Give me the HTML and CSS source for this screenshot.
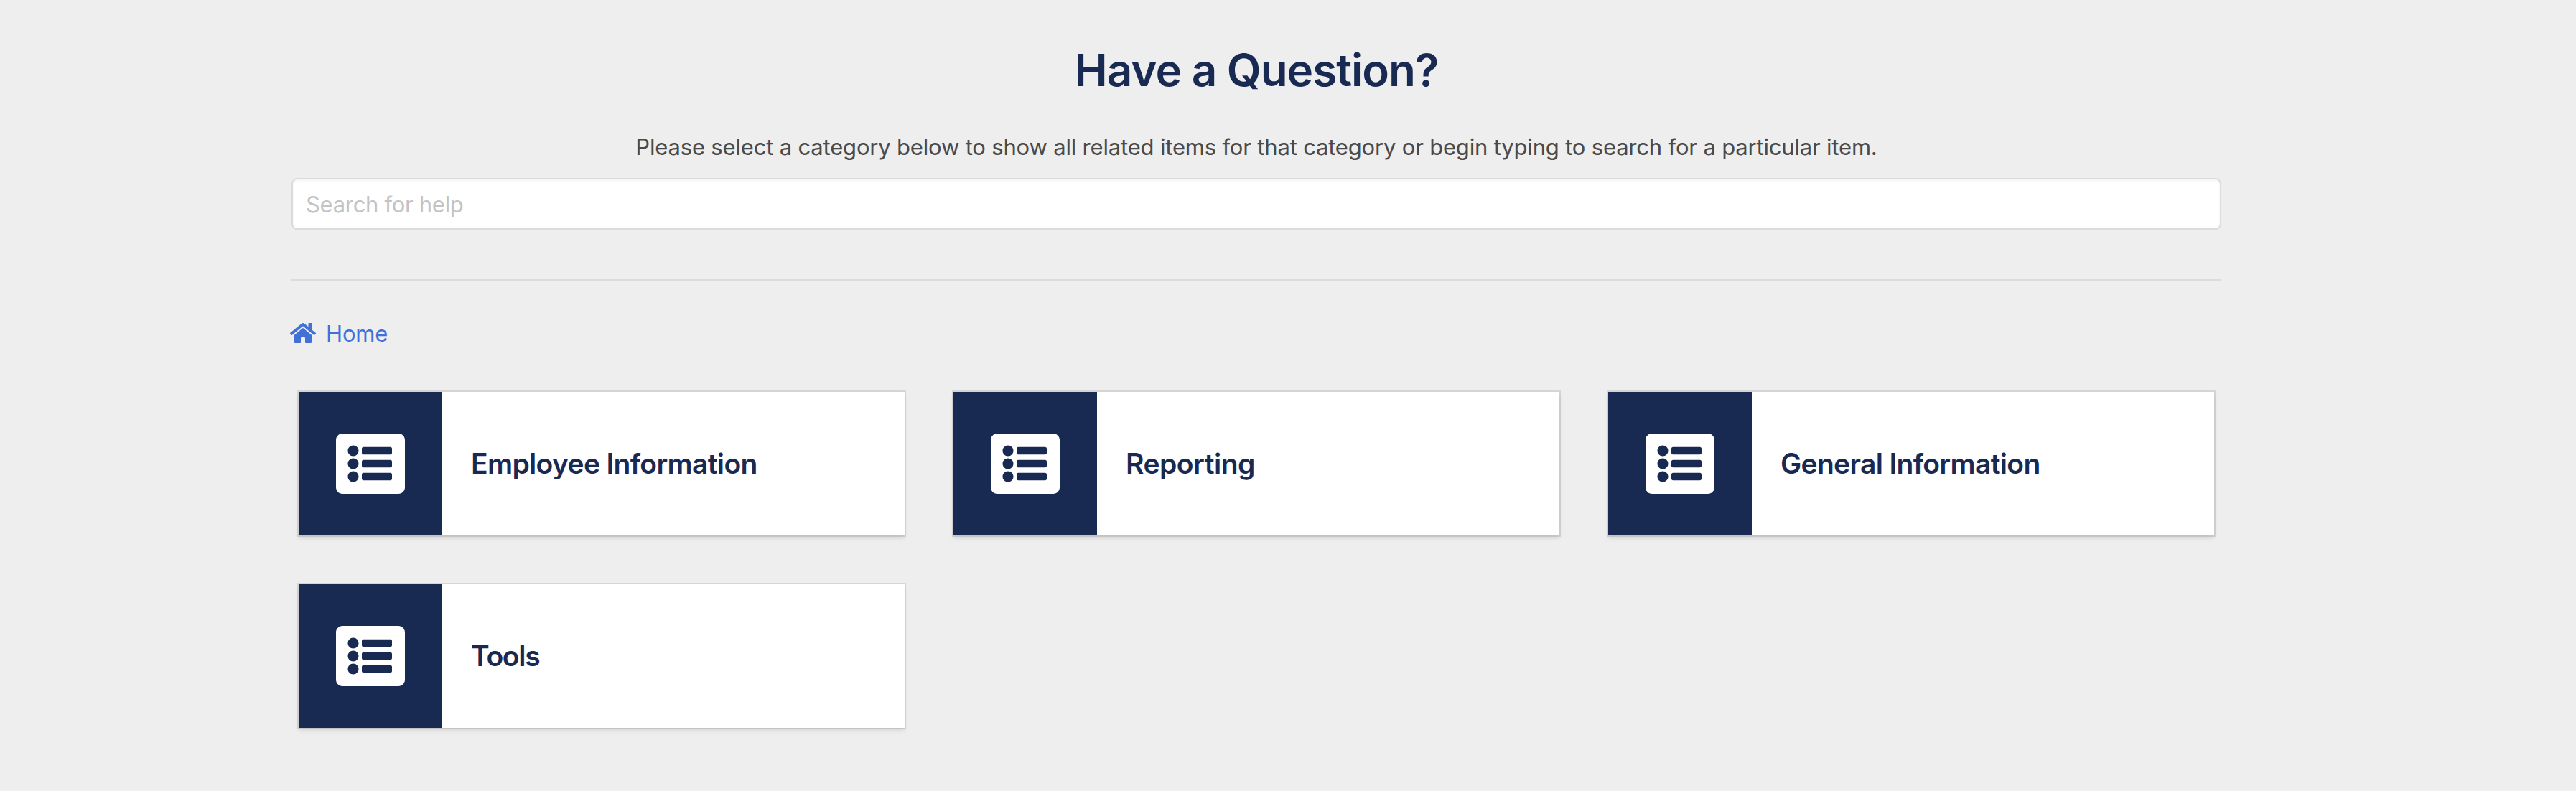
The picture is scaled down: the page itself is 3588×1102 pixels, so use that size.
FILE: index.html
```html
<!DOCTYPE html>
<html lang="en">
<head>
<meta charset="utf-8">
<title>Have a Question?</title>
<link rel="stylesheet" href="styles.css">
</head>
<body>
<svg class="sprite" aria-hidden="true">
  <symbol id="icon-list" viewBox="0 0 512 512">
    <path d="M464 480H48c-26.51 0-48-21.49-48-48V80c0-26.51 21.49-48 48-48h416c26.51 0 48 21.49 48 48v352c0 26.51-21.49 48-48 48zM128 120c-22.091 0-40 17.909-40 40s17.909 40 40 40 40-17.909 40-40-17.909-40-40-40zm0 96c-22.091 0-40 17.909-40 40s17.909 40 40 40 40-17.909 40-40-17.909-40-40-40zm0 96c-22.091 0-40 17.909-40 40s17.909 40 40 40 40-17.909 40-40-17.909-40-40-40zm288-136v-32c0-6.627-5.373-12-12-12H204c-6.627 0-12 5.373-12 12v32c0 6.627 5.373 12 12 12h200c6.627 0 12-5.373 12-12zm0 96v-32c0-6.627-5.373-12-12-12H204c-6.627 0-12 5.373-12 12v32c0 6.627 5.373 12 12 12h200c6.627 0 12-5.373 12-12zm0 96v-32c0-6.627-5.373-12-12-12H204c-6.627 0-12 5.373-12 12v32c0 6.627 5.373 12 12 12h200c6.627 0 12-5.373 12-12z"/>
  </symbol>
  <symbol id="icon-home" viewBox="0 0 576 512">
    <path d="M280.37 148.26L96 300.11V464a16 16 0 0 0 16 16l112.06-.29a16 16 0 0 0 15.92-16V368a16 16 0 0 1 16-16h64a16 16 0 0 1 16 16v95.64a16 16 0 0 0 16 16.05L464 480a16 16 0 0 0 16-16V300L295.67 148.26a12.19 12.19 0 0 0-15.3 0zM571.6 251.47L488 182.56V44.05a12 12 0 0 0-12-12h-56a12 12 0 0 0-12 12v72.61L318.47 43a48 48 0 0 0-61 0L4.34 251.47a12 12 0 0 0-1.6 16.9l25.5 31A12 12 0 0 0 45.15 301l235.22-193.74a12.19 12.19 0 0 1 15.3 0L530.9 301a12 12 0 0 0 16.9-1.6l25.5-31a12 12 0 0 0-1.7-16.93z"/>
  </symbol>
</svg>
<main class="help">
  <h1 class="help-title">Have a Question?</h1>
  <p class="help-intro">Please select a category below to show all related items for that category or begin typing to search for a particular item.</p>
  <input class="help-search" type="text" placeholder="Search for help">
  <hr class="help-rule">
  <nav class="breadcrumb">
    <a class="breadcrumb-link"><svg class="breadcrumb-icon"><use href="#icon-home"/></svg><span>Home</span></a>
  </nav>
  <section class="categories">
    <a class="card"><span class="card-icon"><svg><use href="#icon-list"/></svg></span><span class="card-name">Employee Information</span></a>
    <a class="card"><span class="card-icon"><svg><use href="#icon-list"/></svg></span><span class="card-name card-name--loose">Reporting</span></a>
    <a class="card"><span class="card-icon"><svg><use href="#icon-list"/></svg></span><span class="card-name">General Information</span></a>
    <a class="card"><span class="card-icon"><svg><use href="#icon-list"/></svg></span><span class="card-name card-name--tight">Tools</span></a>
  </section>
</main>
</body>
</html>
```
FILE: styles.css
```css
* {
  box-sizing: border-box;
}

body {
  margin: 0;
  min-height: 100vh;
  background: #eee;
  color: #4a4a4a;
  font: 31px/48px Inter, "Liberation Sans", sans-serif;
}

svg {
  display: block;
  fill: currentColor;
}

.sprite {
  display: none;
}

.help {
  width: 2688px;
  margin-left: 406px;
  padding-top: 62px;
}

.help-title {
  margin: 0 0 47px;
  color: #182952;
  font-size: 62px;
  font-weight: 600;
  line-height: 72px;
  letter-spacing: -1.05px;
  text-align: center;
}

.help-intro {
  margin: 0 0 19px;
  letter-spacing: -0.18px;
  text-align: center;
}

.help-search {
  display: block;
  width: 100%;
  height: 72px;
  padding: 0 18px;
  border: 2px solid #dbdbdb;
  border-radius: 8px;
  background: #fff;
  box-shadow: inset 0 2px 4px rgba(10, 10, 10, 0.05);
  color: #363636;
  font: inherit;
  letter-spacing: -0.3px;
}

.help-search::placeholder {
  color: #c3c3c3;
  opacity: 1;
}

.help-rule {
  height: 4px;
  margin: 68px 0 48px;
  border: 0;
  background: #dbdbdb;
}

.breadcrumb {
  display: flex;
  margin: 0 0 57px -2px;
}

.breadcrumb-link {
  display: flex;
  align-items: flex-start;
  gap: 14px;
  color: #4171d6;
  line-height: 49px;
  letter-spacing: -0.15px;
}

.breadcrumb-icon {
  width: 36px;
  height: 32px;
  margin-top: 8px;
}

.categories {
  display: grid;
  grid-template-columns: repeat(3, 1fr);
  gap: 68px;
  padding: 0 10px;
}

.card {
  display: flex;
  height: 200px;
  background: #fff;
  box-shadow: 0 4px 6px rgba(10, 10, 10, 0.1), 0 0 0 2px rgba(10, 10, 10, 0.1);
  color: #182952;
}

.card-icon {
  display: flex;
  align-items: center;
  justify-content: center;
  width: 200px;
  background: #182952;
  color: #fff;
}

.card-icon svg {
  width: 96px;
  height: 96px;
}

.card-name {
  align-self: center;
  padding-left: 40px;
  font-size: 39px;
  font-weight: 600;
  letter-spacing: -0.67px;
}

.card-name--loose {
  letter-spacing: -0.5px;
}

.card-name--tight {
  letter-spacing: -1.3px;
}
```
